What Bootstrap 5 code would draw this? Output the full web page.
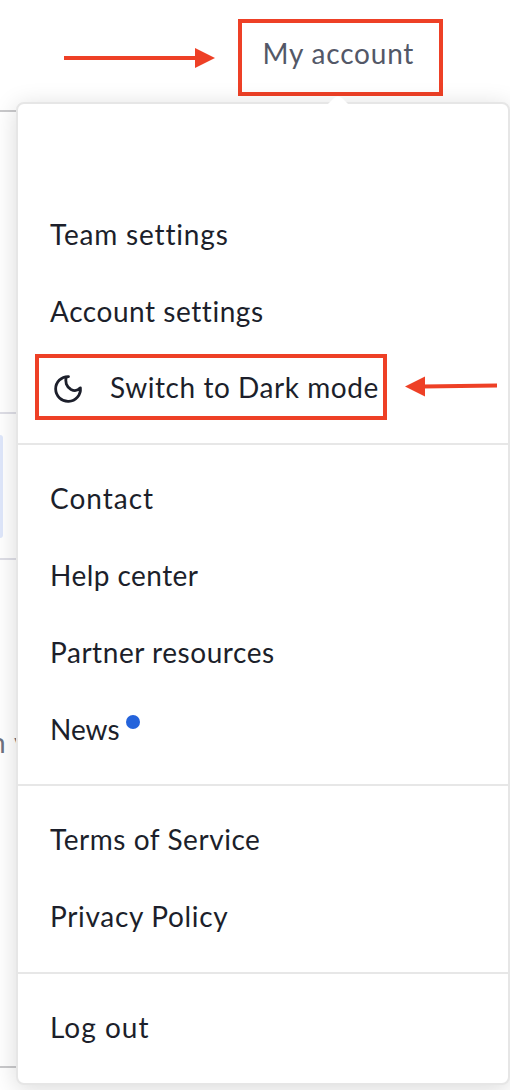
<!DOCTYPE html>
<html lang="en">
<head>
<meta charset="utf-8">
<meta name="viewport" content="width=device-width, initial-scale=1">
<title>My account</title>
<link href="https://cdn.jsdelivr.net/npm/bootstrap@5.3.0/dist/css/bootstrap.min.css" rel="stylesheet">
<style>
  :root { --ink: #1c1f2b; --mark-red: #ee4026; --rule: #e7e7e7; }
  body { font-family: Lato, "Liberation Sans", sans-serif; font-size: 28px; line-height: 1; color: var(--ink); background: #fff; font-variant-ligatures: none; }
  .screen { height: 1090px; }
  .topbar { height: 110px; padding: 19px 67px 0 64px; }
  .outlined { border: 4px solid var(--mark-red); }
  .account-link { width: 205px; height: 77px; color: #535867; padding: 0 0 9px 20.5px; letter-spacing: .8px; }
  .arrow-right { width: 151px; height: 20px; margin-top: 29px; }
  .page-panel { height: 958px; border-top: 2px solid #c9c9cb; border-bottom: 2px solid #c9c9cb; }
  .panel-head { height: 300px; }
  .panel-strip { height: 148px; border-top: 2px solid #dedee6; border-bottom: 2px solid #dedee6; padding-top: 21px; }
  .strip-chip { width: 3px; height: 103px; background: #dfe7fb; border-radius: 0 4px 4px 0; }
  .panel-note { color: #6d7180; margin: 168px 0 0 -10px; word-spacing: 2px; white-space: nowrap; }
  .account-menu { left: 16px; top: 102px; width: 494px; height: 983px; border: 2px solid #e6e6e6; border-radius: 8px; background: #fff; box-shadow: 0 4px 24px rgba(0,0,0,.15); }
  .menu-tip { left: 308px; top: -8px; width: 24px; height: 10px; }
  .menu-group { padding: 16px 0 15px 32px; }
  .menu-group + .menu-group { border-top: 2px solid var(--rule); }
  .menu-row { height: 77px; padding-bottom: 3px; white-space: nowrap; letter-spacing: .55px; }
  .tracked { letter-spacing: .68px; }
  .tracked-more { letter-spacing: .82px; }
  .tracked-wide { letter-spacing: 1px; }
  .tracked-slim { letter-spacing: .45px; }
  .tracked-none { letter-spacing: 0; }
  .mode-switch { width: 352px; height: 66px; margin-left: -15px; margin-top: -2px; padding-left: 14px; }
  .moon { width: 30px; height: 30px; margin: 4px 27px 0 0; }
  .arrow-left { width: 93px; height: 22px; margin-left: 18px; margin-top: -4px; }
  .news-dot { width: 14px; height: 14px; background: #2463db; margin: -15px 0 0 6px; }
</style>
</head>
<body>
<div class="screen position-relative overflow-hidden">
  <header class="topbar d-flex justify-content-between align-items-start">
    <svg class="arrow-right" viewBox="0 0 151 20"><path d="M0 10H133" stroke="#ee4026" stroke-width="4"/><path d="M131 0L151 10L131 20Z" fill="#ee4026"/></svg>
    <a class="account-link outlined d-flex align-items-center text-decoration-none" href="#">My account</a>
  </header>
  <main class="page-panel">
    <div class="panel-head"></div>
    <div class="panel-strip"><div class="strip-chip"></div></div>
    <p class="panel-note">n v</p>
  </main>
  <nav class="account-menu position-absolute">
    <svg class="menu-tip position-absolute" viewBox="0 0 24 10"><path d="M0 10L8 2Q12 -1 16 2L24 10Z" fill="#fff"/></svg>
    <div class="menu-group">
      <div class="menu-row"></div>
      <div class="menu-row d-flex align-items-center tracked-more">Team settings</div>
      <div class="menu-row d-flex align-items-center">Account settings</div>
      <div class="menu-row d-flex align-items-center">
        <div class="mode-switch outlined d-flex align-items-center">
          <svg class="moon" viewBox="0 0 30 30" fill="none" stroke="#1c1f2b" stroke-width="2.8" stroke-linejoin="round"><path d="M15.500 2.600A12.400 12.400 0 1 0 27.400 13.800C25 16.500 21.500 17.300 18 15.500C13.500 13 11.500 7.500 13.500 2.800Z"/></svg>
          <span>Switch to Dark mode</span>
        </div>
        <svg class="arrow-left" viewBox="0 0 93 22"><path d="M18 11.500L92 10.500" stroke="#ee4026" stroke-width="4"/><path d="M0 11.500L20 1.500V21.500Z" fill="#ee4026"/></svg>
      </div>
    </div>
    <div class="menu-group">
      <div class="menu-row d-flex align-items-center tracked-wide">Contact</div>
      <div class="menu-row d-flex align-items-center tracked-slim">Help center</div>
      <div class="menu-row d-flex align-items-center">Partner resources</div>
      <div class="menu-row d-flex align-items-center tracked-none">News<span class="news-dot rounded-circle"></span></div>
    </div>
    <div class="menu-group pb-3">
      <div class="menu-row d-flex align-items-center">Terms of Service</div>
      <div class="menu-row d-flex align-items-center tracked">Privacy Policy</div>
    </div>
    <div class="menu-group">
      <div class="menu-row d-flex align-items-center tracked-wide">Log out</div>
    </div>
  </nav>
</div>
<script src="https://cdn.jsdelivr.net/npm/bootstrap@5.3.0/dist/js/bootstrap.bundle.min.js"></script>
</body>
</html>
